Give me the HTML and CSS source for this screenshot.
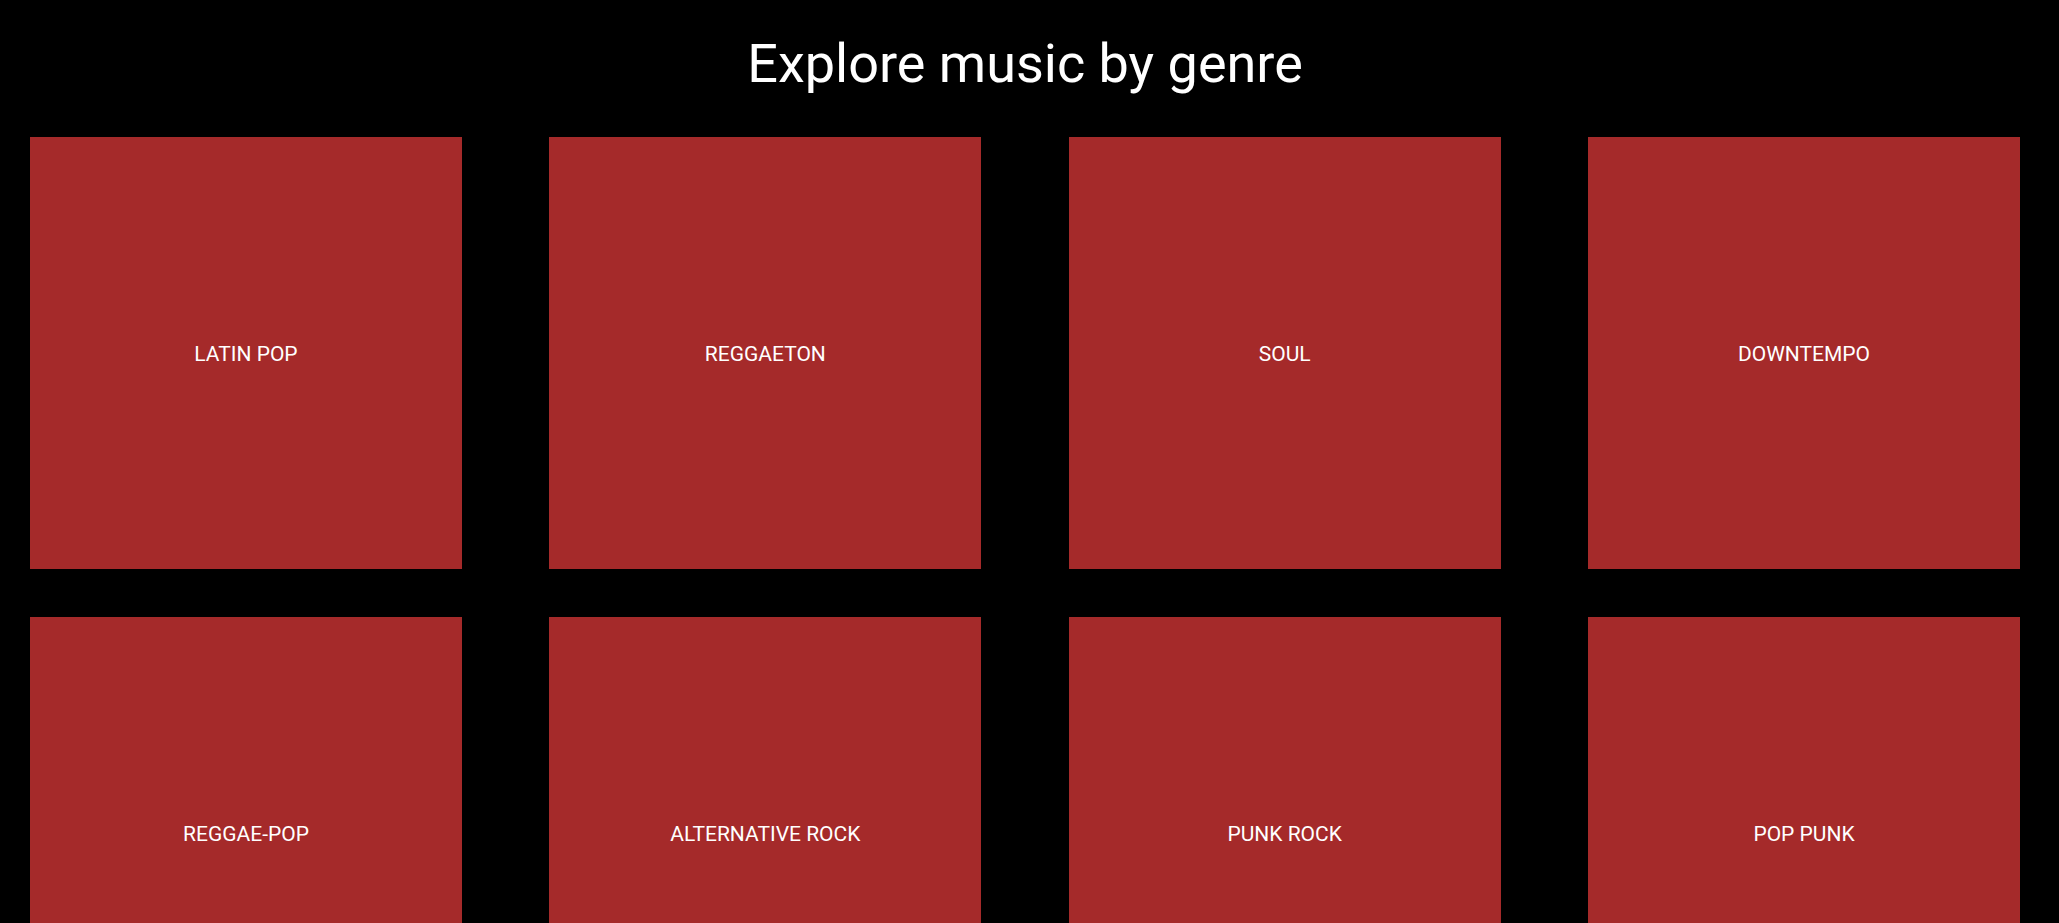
FILE: index.html
```html
<!DOCTYPE html>
<html lang="en">
<head>
<meta charset="utf-8">
<title>Explore music by genre</title>
<link rel="stylesheet" href="styles.css">
</head>
<body>
<main class="page">
  <h1 class="title">Explore music by genre</h1>
  <section class="genres">
    <a class="genre" href="#">LATIN POP</a>
    <a class="genre" href="#">REGGAETON</a>
    <a class="genre" href="#">SOUL</a>
    <a class="genre" href="#">DOWNTEMPO</a>
    <a class="genre" href="#">REGGAE-POP</a>
    <a class="genre" href="#">ALTERNATIVE ROCK</a>
    <a class="genre" href="#">PUNK ROCK</a>
    <a class="genre" href="#">POP PUNK</a>
  </section>
</main>
</body>
</html>
```
FILE: styles.css
```css
html, body {
  margin: 0;
  padding: 0;
  background: #000;
  color: #fff;
  font-family: Roboto, "Liberation Sans", sans-serif;
}

.page {
  padding: 0 39px 0 30px;
}

.title {
  margin: 0;
  padding-top: 32px;
  height: 137px;
  box-sizing: border-box;
  text-align: center;
  font-size: 54px;
  font-weight: 400;
  line-height: 64px;
}

.genres {
  display: grid;
  grid-template-columns: repeat(4, 432px);
  justify-content: space-between;
  row-gap: 48px;
}

.genre {
  height: 432px;
  box-sizing: border-box;
  padding-top: 2px;
  background: #a52a2a;
  color: #fff;
  text-decoration: none;
  display: flex;
  align-items: center;
  justify-content: center;
  font-size: 21px;
  font-weight: 400;
}
```
